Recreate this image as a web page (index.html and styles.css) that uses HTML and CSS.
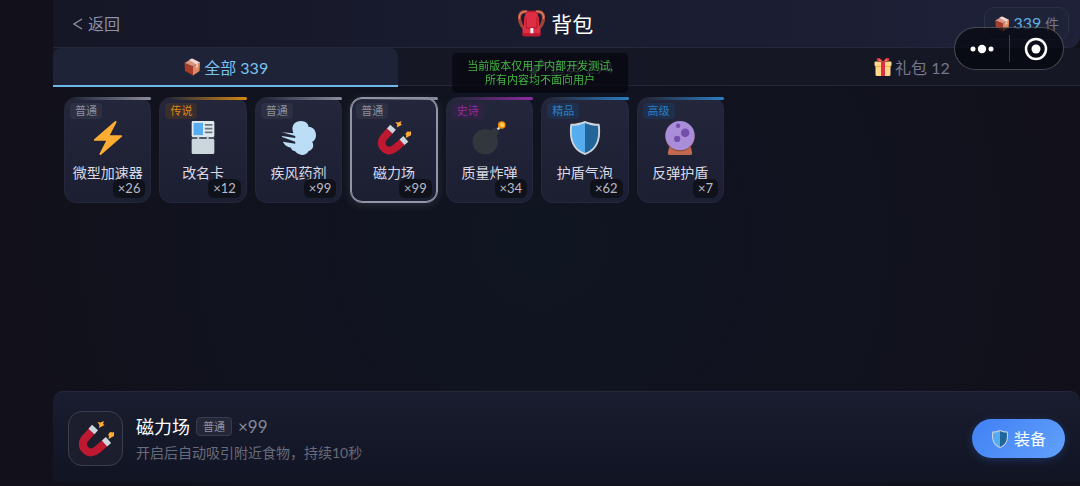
FILE: index.html
```html
<!DOCTYPE html>
<html lang="zh-CN">
<head>
<meta charset="utf-8">
<meta name="viewport" content="width=device-width, initial-scale=1">
<title>背包</title>
<link rel="stylesheet" href="styles.css">
</head>
<body>
<svg class="sprite" aria-hidden="true">
  <symbol id="box" viewBox="0 0 36 36">
    <path fill="#d9957f" d="M18 1 34 9 20 17 3 10z"/>
    <path fill="#f0d9d2" d="M12 4 18 1 34 9 27 13z"/>
    <path fill="#a63d2a" d="M3 10 20 17 20 35 4 26z"/>
    <path fill="#e08a63" d="M20 17 34 9 33 26 20 35z"/>
    <path fill="#f3c9b5" d="M26 13.500 30 11.300 30 18 26 20.500z"/>
  </symbol>
  <symbol id="backpack" viewBox="0 0 36 36">
    <path fill="none" stroke="#a0413a" stroke-width="4.500" d="M13 3C3 0 0 8 3 16q1 5 5 8M23 3c10-3 13 5 10 13q-1 5-5 8"/>
    <path fill="none" stroke="#d9805f" stroke-width="2" d="M12 2C4 1 1 6 2 12M24 2c8-1 11 4 10 10"/>
    <path fill="#be1931" d="M11 3q1-2 3-2h8q2 0 3 2l3 8v9H8v-9z"/>
    <path fill="#dd2e44" d="M8 14q0-6 4-11h12q4 5 4 11v8q2 1 2 3v8q0 2-3 2H9q-3 0-3-2v-8q0-2 2-3z"/>
    <path fill="#be1931" d="M10 10h1.500v11q0 2 2 2h9q2 0 2-2V10H26v12q0 3-3 3H13q-3 0-3-3zM6 31h24v2q0 2-3 2H9q-3 0-3-2z"/>
    <path fill="#e9eef1" d="M16.500 24h4v7h-4z"/>
  </symbol>
  <symbol id="gift" viewBox="0 0 36 36">
    <path fill="#fdd888" d="M3 15h30v18q0 3-3 3H6q-3 0-3-3z"/>
    <path fill="#fcab40" d="M3 15h30v3H3z"/>
    <path fill="#fdd888" d="M1 9q0-2 2-2h30q2 0 2 2v5q0 2-2 2H3q-2 0-2-2z"/>
    <path fill="#da2f47" d="M14 7h8v29h-8zM18 8C14 0 9-2 6 1c-3 4 2 7 12 7zM18 8c4-8 9-10 12-7 3 4-2 7-12 7z"/>
    <path fill="#fcab40" d="M9 3q3-1 6 3-6 0-6-3zM27 3q-3-1-6 3 6 0 6-3z"/>
  </symbol>
  <symbol id="tube" viewBox="0 0 36 36">
    <path fill="#8899a6" d="m24 1 11 11-4 4L20 5z"/>
    <path fill="#5c9d78" d="m22 7 8 8-17 17q-5 4-9 0t0-9z"/>
  </symbol>
  <symbol id="bolt" viewBox="0 0 36 36">
    <path fill="#ffac33" d="M32.938 15.651C32.792 15.260 32.418 15 32 15H19.925L26.890 1.458c.219-.426.106-.947-.271-1.243-.370-.290-.900-.290-1.272.028L18 6.588 3.347 19.243c-.316.273-.430.714-.284 1.105S3.582 21 4 21h12.075L9.110 34.542c-.219.426-.106.947.271 1.243.370.290.900.290 1.272-.028L18 29.412l14.653-12.655c.317-.273.430-.714.285-1.106z"/>
  </symbol>
  <symbol id="card" viewBox="0 0 36 36">
    <rect x="6" y="0" width="24" height="17" rx="1.500" fill="#e1e8ed"/>
    <rect x="8" y="2" width="10" height="13" fill="#55acee"/>
    <path stroke="#66757f" stroke-width="1.800" d="M20 4h8M20 8h8M20 12h8"/>
    <rect x="6" y="19" width="24" height="16" rx="1.500" fill="#ccd6dd"/>
    <path stroke="#66757f" stroke-width="1.500" d="M6 18h24"/>
    <path stroke="#ccd6dd" stroke-width="2" d="M13 16v5M23 16v5"/>
  </symbol>
  <symbol id="wind" viewBox="0 0 36 36">
    <path fill="#bbddf5" d="M11 9C11 3 15 0 20 0c5 0 8 3 8 6 5 0 8 4 8 9 0 4-2 6-4 7 3 6-1 9-4 10-2 4-7 5-10 3-3-1-3-3-7-4l-2-3c-3 0-7-3-8-6l13 2v-2L0 17v-1l14 2v-2L0 12l12 1z"/>
  </symbol>
  <symbol id="magnet" viewBox="0 0 36 36">
    <path fill="none" stroke="#be1931" stroke-width="8" d="M14 10 7.500 17c-3.500 4-3.500 8.500 0 12s8 3 12-.500l7.500-6.500"/>
    <path fill="none" stroke="#ccd6dd" stroke-width="8" d="m13.500 10.500 3.500-4M26.500 22.500l4-3.500"/>
    <path fill="#ffac33" d="m19.500 1 3 .500L26 0l-1 3 1.500 1-5.500 3 .500-3zM32 11l3 .500 2-1.500-1 4 0 1-5.500 3 .500-3-1-1z"/>
  </symbol>
  <symbol id="bomb" viewBox="0 0 36 36">
    <circle cx="14" cy="22" r="13.500" fill="#31373d"/>
    <path fill="#31373d" d="m20 10 4-3 5 5-3 4z"/>
    <path fill="none" stroke="#ccd6dd" stroke-width="2.500" d="m27 9 3-3"/>
    <circle cx="31.500" cy="4.200" r="4" fill="#f4900c"/>
    <circle cx="32" cy="4" r="2.300" fill="#ffcc4d"/>
  </symbol>
  <symbol id="shield" viewBox="0 0 36 36">
    <path fill="#ccd6dd" d="M18 0c5 2 10 3 15 3q1 1 1 8c0 14-6 21-16 25C8 32 2 25 2 11q0-7 1-8c5 0 10-1 15-3z"/>
    <path fill="#55acee" d="M18 2C13 4 9 5 4.500 5q-.500 2-.500 6c0 13 5 19 14 23z"/>
    <path fill="#226699" d="M18 2c5 2 9 3 13.500 3q.500 2 .500 6c0 13-5 19-14 23z"/>
  </symbol>
  <symbol id="orb" viewBox="0 0 36 36">
    <path fill="#c1694f" d="M7 26h22l2 8q0 2-2 2H7q-2 0-2-2z"/>
    <circle cx="18" cy="16.500" r="15.500" fill="#8a4633"/>
    <circle cx="18" cy="15.500" r="15.500" fill="#aa8dd8"/>
    <g fill="#744eaa"><circle cx="16" cy="5" r="2.300"/><circle cx="23.500" cy="12.500" r="4.500"/><circle cx="15" cy="19" r="3.300"/></g>
  </symbol>
</svg>

<div class="app">
  <header class="header">
    <button class="back" type="button"><svg class="chevron" viewBox="0 0 10 12" aria-hidden="true"><path d="M9 1 1 6l8 5"/></svg>返回</button>
    <h1 class="title"><svg class="title-icon"><use href="#backpack"/></svg>背包</h1>
    <div class="total"><svg class="icon-sm"><use href="#box"/></svg><span><strong>339</strong> 件</span></div>
  </header>

  <nav class="tabs">
    <button class="tab active" type="button"><svg class="icon-md"><use href="#box"/></svg>全部 339</button>
    <button class="tab" type="button"><svg class="icon-md"><use href="#tube"/></svg>道具 294</button>
    <button class="tab" type="button"><svg class="icon-md"><use href="#gift"/></svg>礼包 12</button>
  </nav>

  <main class="grid">
    <button class="item common" type="button"><span class="tag">普通</span><svg class="item-icon"><use href="#bolt"/></svg><span class="name">微型加速器</span><span class="count">×26</span></button>
    <button class="item legend" type="button"><span class="tag">传说</span><svg class="item-icon"><use href="#card"/></svg><span class="name">改名卡</span><span class="count">×12</span></button>
    <button class="item common" type="button"><span class="tag">普通</span><svg class="item-icon"><use href="#wind"/></svg><span class="name">疾风药剂</span><span class="count">×99</span></button>
    <button class="item common selected" type="button"><span class="tag">普通</span><svg class="item-icon"><use href="#magnet"/></svg><span class="name">磁力场</span><span class="count">×99</span></button>
    <button class="item epic" type="button"><span class="tag">史诗</span><svg class="item-icon"><use href="#bomb"/></svg><span class="name">质量炸弹</span><span class="count">×34</span></button>
    <button class="item rare" type="button"><span class="tag">精品</span><svg class="item-icon"><use href="#shield"/></svg><span class="name">护盾气泡</span><span class="count">×62</span></button>
    <button class="item rare" type="button"><span class="tag">高级</span><svg class="item-icon"><use href="#orb"/></svg><span class="name">反弹护盾</span><span class="count">×7</span></button>
  </main>

  <section class="detail">
    <div class="detail-icon"><svg><use href="#magnet"/></svg></div>
    <div class="detail-text">
      <div class="detail-head"><h2>磁力场</h2><span class="detail-tag">普通</span><span class="detail-count">×99</span></div>
      <p>开启后自动吸引附近食物，持续10秒</p>
    </div>
    <button class="equip" type="button"><svg class="icon-md"><use href="#shield"/></svg>装备</button>
  </section>
</div>

<div class="notice">当前版本仅用于内部开发测试,<br>所有内容均不面向用户</div>
<div class="capsule">
  <button type="button" aria-label="更多"><svg width="24" height="10" viewBox="0 0 24 10"><circle cx="3" cy="5" r="2.500"/><circle cx="12" cy="5" r="4.200"/><circle cx="21" cy="5" r="2.500"/></svg></button>
  <button type="button" aria-label="关闭"><svg width="24" height="24" viewBox="0 0 24 24"><circle class="ring" cx="12" cy="12" r="10"/><circle cx="12" cy="12" r="4.500"/></svg></button>
</div>
</body>
</html>
```
FILE: styles.css
```css
* {
  box-sizing: border-box;
}

body {
  margin: 0;
  color: #fff;
  background: radial-gradient(circle at 50% 50%, #101522 0%, #11121d 70%, #12101a 100%);
  font-family: Lato, "Noto Sans CJK SC", sans-serif;
}

button {
  margin: 0;
  padding: 0;
  border: 0;
  background: none;
  color: inherit;
  font: inherit;
}

.sprite {
  position: absolute;
  width: 0;
  height: 0;
}

.app {
  display: flex;
  flex-direction: column;
  min-height: 100vh;
  padding: 0 0 4px 53px;
}

.icon-sm {
  width: 16px;
  height: 16px;
}

.icon-md {
  width: 18px;
  height: 18px;
}

/* Header */
.header {
  display: flex;
  align-items: center;
  justify-content: space-between;
  height: 48px;
  padding: 0 11px;
  border-bottom: 1px solid #25283a;
  border-radius: 0 0 12px 0;
  background: linear-gradient(90deg, #151727, #1e2138);
}

.back {
  display: flex;
  align-items: center;
  gap: 4px;
  padding: 4px 8px;
  color: #8f90a6;
  font-size: 16px;
  line-height: 24px;
}

.chevron {
  width: 12px;
  height: 12px;
  fill: none;
  stroke: currentColor;
  stroke-width: 1.4;
}

.title {
  display: flex;
  align-items: center;
  gap: 6px;
  margin: 0;
  font-size: 21px;
  font-weight: 400;
  line-height: 28px;
}

.title-icon {
  width: 27px;
  height: 27px;
}

.total {
  display: flex;
  align-items: center;
  gap: 4px;
  padding: 4px 9px;
  border: 1px solid #2c3045;
  border-radius: 10px;
  background: #1f2338;
  color: #777a8c;
  font-size: 14px;
  line-height: 22px;
}

.total strong {
  color: #5eafe0;
  font-size: 16px;
  font-weight: 400;
}

/* Tabs */
.tabs {
  display: flex;
  height: 38px;
  border-bottom: 1px solid #25273a;
  background: #151725;
}

.tab {
  display: flex;
  flex: 1 1 auto;
  align-items: center;
  justify-content: center;
  gap: 3px;
  height: 39px;
  padding-bottom: 2px;
  color: #75778a;
  font-size: 16px;
}

.tab.active {
  border-bottom: 2px solid #6eb9e8;
  border-radius: 8px 8px 0 0;
  padding-bottom: 0;
  background: #1f2338;
  color: #78c2ef;
}

/* Item grid */
.grid {
  display: grid;
  grid-template-columns: repeat(7, 1fr);
  gap: 8px;
  flex: 1;
  align-content: start;
  max-width: 682px;
  padding: 11px;
}

.item {
  --tone: #8b8d9d;
  --tint: #2d3042;
  position: relative;
  display: flex;
  flex-direction: column;
  align-items: center;
  gap: 8px;
  padding: 23px 0 19px;
  border: 1px solid #25283a;
  border-radius: 12px;
  background: linear-gradient(#24273b, #1c1f32);
}

.item::before {
  content: "";
  position: absolute;
  top: -1px;
  right: -1px;
  left: 8px;
  height: 3px;
  border-radius: 0 3px 3px 0;
  background: linear-gradient(90deg, transparent, var(--tone));
}

.legend {
  --tone: #d98a14;
  --tint: #3a2d2d;
}

.epic {
  --tone: #8f2ba0;
  --tint: #2e2340;
}

.rare {
  --tone: #2c7fc4;
  --tint: #1f304c;
}

.selected {
  border-color: #9295a6;
  box-shadow: inset 0 0 0 1px #9295a6, 0 2px 10px #8b8d9d33;
}

.tag {
  position: absolute;
  top: 5px;
  left: 5px;
  padding: 0 5px;
  border-radius: 4px;
  background: var(--tint);
  color: var(--tone);
  font-size: 11px;
  line-height: 16px;
}

.item-icon {
  width: 34px;
  height: 34px;
}

.name {
  color: #d9dae6;
  font-size: 14px;
  line-height: 20px;
  white-space: nowrap;
}

.count {
  position: absolute;
  right: 5px;
  bottom: 4px;
  padding: 0 5px;
  border-radius: 6px;
  background: #10121b;
  color: #b8bac5;
  font-size: 13px;
  line-height: 19px;
}

/* Selected item panel */
.detail {
  display: flex;
  align-items: center;
  gap: 13px;
  padding: 19px 15px 16px;
  border-top: 1px solid #25283a;
  border-radius: 10px 10px 0 0;
  background: linear-gradient(#1a1d2f, #111423);
}

.detail-icon {
  display: flex;
  align-items: center;
  justify-content: center;
  width: 55px;
  height: 55px;
  border: 1px solid #3b3e4d;
  border-radius: 14px;
  background: #1c1e2e;
}

.detail-icon svg {
  width: 36px;
  height: 36px;
}

.detail-text {
  flex: 1;
}

.detail-head {
  display: flex;
  align-items: center;
  gap: 6px;
}

.detail h2 {
  margin: 0;
  font-size: 18px;
  font-weight: 400;
  line-height: 28px;
}

.detail-tag {
  padding: 0 6px;
  border: 1px solid #383b4b;
  border-radius: 4px;
  background: #242738;
  color: #9092a2;
  font-size: 11px;
  line-height: 17px;
}

.detail-count {
  color: #85889a;
  font-size: 17px;
}

.detail p {
  margin: 0;
  color: #686b7c;
  font-size: 14px;
  line-height: 24px;
}

.equip {
  display: flex;
  align-items: center;
  gap: 5px;
  padding: 0 19px;
  border-radius: 20px;
  background: linear-gradient(135deg, #4080f4, #62a1fb);
  box-shadow: 0 2px 8px #3b82f640;
  font-size: 16px;
  line-height: 39px;
}

/* Overlays */
.notice {
  position: fixed;
  top: 53px;
  left: 50%;
  padding: 6px 15px;
  border-radius: 5px;
  background: #05060db8;
  color: #43b843;
  font-size: 11px;
  line-height: 14px;
  text-align: center;
  white-space: nowrap;
  transform: translateX(-50%);
}

.capsule {
  position: fixed;
  top: 27px;
  right: 16px;
  display: flex;
  width: 110px;
  height: 43px;
  border: 1px solid #ffffff40;
  border-radius: 22px;
  background: #06070eb8;
}

.capsule button {
  display: flex;
  flex: 1;
  align-items: center;
  justify-content: center;
}

.capsule button + button::before {
  content: "";
  position: absolute;
  left: 50%;
  width: 1px;
  height: 27px;
  background: #ffffff33;
}

.capsule svg {
  fill: #fff;
}

.capsule .ring {
  fill: none;
  stroke: #fff;
  stroke-width: 2.5;
}
```
